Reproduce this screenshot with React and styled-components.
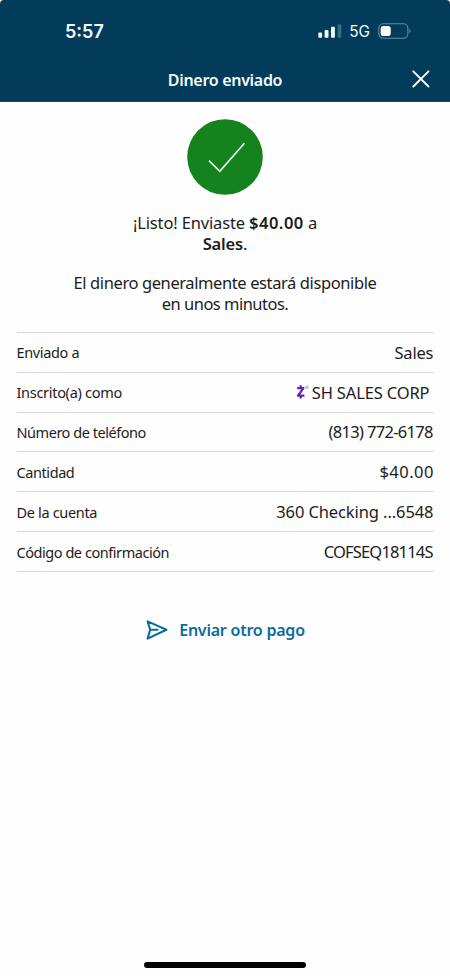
import React from "react"
import styled, { createGlobalStyle } from "styled-components"

const details = [
  { label: "Enviado a", value: "Sales", labelSpacing: -0.35, valueSpacing: -0.2 },
  {
    label: "Inscrito(a) como",
    value: "SH SALES CORP",
    labelSpacing: -0.3,
    valueSpacing: -0.15,
    zelle: true,
  },
  { label: "Número de teléfono", value: "(813) 772-6178", labelSpacing: -0.46, valueSpacing: -0.68 },
  { label: "Cantidad", value: "$40.00", labelSpacing: -0.42, valueSpacing: 0.5 },
  { label: "De la cuenta", value: "360 Checking ...6548", labelSpacing: -0.33, valueSpacing: -0.1 },
  { label: "Código de confirmación", value: "COFSEQ18114S", labelSpacing: -0.45, valueSpacing: -0.83 },
]

const App = () => {
  return (
    <>
      <GlobalStyle />
      <Screen>
        <Header>
          <StatusBar>
            <Clock>5:57</Clock>
            <StatusIcons>
              <SignalIcon />
              <Network>5G</Network>
              <BatteryIcon />
            </StatusIcons>
          </StatusBar>
          <TitleBar>
            <Title>Dinero enviado</Title>
            <CloseButton aria-label="Cerrar">
              <svg width="18" height="18" viewBox="0 0 18 18">
                <path d="M1.3 1.3l15.2 15.2M16.5 1.3L1.3 16.5" stroke="#fff" strokeWidth="1.9" strokeLinecap="round" />
              </svg>
            </CloseButton>
          </TitleBar>
        </Header>
        <Main>
          <Success>
            <svg width="76" height="76" viewBox="0 0 76 76">
              <circle cx="38" cy="38" r="37.8" fill="#14831d" />
              <path d="M22 41.6l10.8 10.8L57.4 24.2" fill="none" stroke="#f4fff2" strokeWidth="1.6" />
            </svg>
          </Success>
          <Message>
            <Line $spacing={-0.15}>
              ¡Listo! Enviaste <Amount>$40.00</Amount> a
            </Line>
            <Line $spacing={-0.15}>
              <b>Sales</b>.
            </Line>
          </Message>
          <Message>
            <Line $spacing={-0.4}>El dinero generalmente estará disponible</Line>
            <Line $spacing={-0.52}>en unos minutos.</Line>
          </Message>
          <Details>
            {details.map((item) => (
              <Row key={item.label}>
                <Label $spacing={item.labelSpacing}>{item.label}</Label>
                <Value $spacing={item.valueSpacing} $inset={item.zelle}>
                  {item.zelle && <ZelleIcon />}
                  {item.value}
                </Value>
              </Row>
            ))}
          </Details>
          <SendAgain>
            <svg width="22" height="20" viewBox="0 0 22 20">
              <path
                d="M1.6 1.4L20.4 9.8 1.6 18.6 4.2 9.8zM4.2 9.8h7.3"
                fill="none"
                stroke="#0b6c9c"
                strokeWidth="2.1"
                strokeLinejoin="round"
                strokeLinecap="round"
              />
            </svg>
            <span>Enviar otro pago</span>
          </SendAgain>
        </Main>
        <HomeIndicator />
      </Screen>
    </>
  )
}

const SignalIcon = () => (
  <svg width="24" height="14" viewBox="0 0 24 14" fill="#f3fbff">
    <rect x="0.3" y="8.6" width="3.8" height="5.2" rx="1" />
    <rect x="6.6" y="6" width="3.9" height="7.8" rx="1" />
    <rect x="13" y="2.8" width="3.9" height="11" rx="1" />
    <rect x="19.6" y="0.2" width="3.8" height="13.6" rx="1" fill="#356a83" />
  </svg>
)

const BatteryIcon = () => (
  <svg width="33" height="16" viewBox="0 0 33 16">
    <rect x="0.7" y="0.8" width="29.2" height="14.4" rx="4.6" fill="none" stroke="#668da3" strokeWidth="1.1" />
    <rect x="2.7" y="3" width="10" height="10" rx="2.8" fill="#fff" />
    <path d="M31.3 5.9c1.7.6 1.7 3.6 0 4.2z" fill="#668da3" />
  </svg>
)

const ZelleIcon = () => (
  <svg width="14" height="16" viewBox="0 0 14 16">
    <path
      d="M2.2 4.1h6.2L3 11.6h6.4M5.7 1.2v3M5.7 11.6v3"
      fill="none"
      stroke="#6a1fb5"
      strokeWidth="2.3"
      strokeLinejoin="round"
    />
    <circle cx="11.9" cy="3.2" r="1.5" fill="#d9c3ea" stroke="#c2a5db" strokeWidth="0.6" />
  </svg>
)

const GlobalStyle = createGlobalStyle`
  * {
    box-sizing: border-box;
  }
  body {
    margin: 0;
    background: #fff;
    font-family: "Noto Sans", "Open Sans", sans-serif;
    color: #1c1c1c;
  }
  p, h1, dl, dt, dd {
    margin: 0;
  }
  svg {
    display: block;
    flex: none;
  }
`

const Screen = styled.div`
  width: 450px;
  height: 976px;
  display: flex;
  flex-direction: column;
  overflow: hidden;
  background: #fefefe;
`

const Header = styled.header`
  height: 102px;
  flex: none;
  background: #033c5a;
  border-bottom: 1px solid #0b4b69;
  border-radius: 4px 4px 0 0;
`

const StatusBar = styled.div`
  height: 60px;
  padding: 2px 39px 0 65px;
  display: flex;
  align-items: center;
  justify-content: space-between;
  font-family: Inter, sans-serif;
  color: #f3fbff;
`

const Clock = styled.span`
  font-size: 18px;
  font-weight: 600;
`

const StatusIcons = styled.div`
  display: flex;
  align-items: center;
`

const Network = styled.span`
  margin: 0 8px 0 7px;
  font-size: 15.3px;
  font-weight: 400;
`

const TitleBar = styled.div`
  height: 38px;
  padding: 0 20px;
  display: grid;
  grid-template-columns: 18px 1fr 18px;
  align-items: center;
`

const Title = styled.h1`
  grid-column: 2;
  padding-top: 1px;
  text-align: center;
  color: #f5fcff;
  font-size: 16px;
  font-weight: 600;
  line-height: 22px;
  letter-spacing: -0.3px;
`

const CloseButton = styled.button`
  padding: 0;
  border: none;
  background: none;
`

const Main = styled.main`
  flex: 1;
  padding: 16.5px 16.5px 0;
`

const Success = styled.div`
  display: flex;
  justify-content: center;
  margin-bottom: 17px;
`

const Message = styled.div`
  margin-bottom: 17px;
  text-align: center;
  font-size: 16.5px;
  line-height: 21.6px;
  b {
    font-weight: 600;
  }
`

const Line = styled.p`
  letter-spacing: ${(props) => props.$spacing}px;
`

const Amount = styled.b`
  letter-spacing: 0.5px;
`

const Details = styled.dl`
  border-top: 1px solid #d6d6d6;
`

const Row = styled.div`
  height: 39.85px;
  display: flex;
  align-items: center;
  justify-content: space-between;
  border-bottom: 1px solid #d6d6d6;
`

const Label = styled.dt`
  font-size: 14.5px;
  letter-spacing: ${(props) => props.$spacing}px;
`

const Value = styled.dd`
  display: flex;
  align-items: center;
  gap: 3px;
  margin-right: ${(props) => -props.$spacing}px;
  padding-right: ${(props) => (props.$inset ? "4px" : "0")};
  font-size: 16.5px;
  letter-spacing: ${(props) => props.$spacing}px;
`

const SendAgain = styled.button`
  display: flex;
  align-items: center;
  gap: 11px;
  margin: 47px auto 0;
  padding: 0 0 0 1px;
  border: none;
  background: none;
  color: #0b6c9c;
  font-family: inherit;
  font-size: 16px;
  font-weight: 600;
  line-height: 22px;
  letter-spacing: -0.22px;
`

const HomeIndicator = styled.div`
  width: 162px;
  height: 5.6px;
  margin: 0 auto 8.4px;
  flex: none;
  border-radius: 3px;
  background: #000;
`

export default App
